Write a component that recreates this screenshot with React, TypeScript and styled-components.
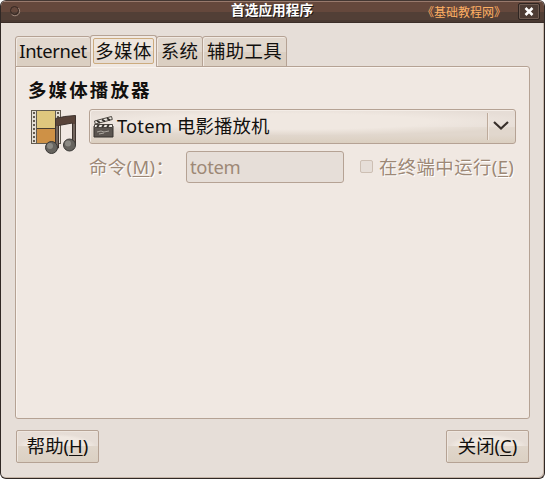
import React from "react";
import styled, { createGlobalStyle } from "styled-components";

const Global = createGlobalStyle`
  html, body { margin: 0; padding: 0; background: #fff; overflow: hidden; }
  * { box-sizing: border-box; }
  button, input { margin: 0; font: inherit; }
  u { text-decoration-thickness: 1px; text-underline-offset: 2px; }
`;

const Window = styled.div`
  width: 545px;
  height: 479px;
  display: flex;
  flex-direction: column;
  overflow: hidden;
  border: 1px solid #302825;
  border-top-color: #443732;
  border-radius: 6px;
  background: #e6ded8;
  box-shadow: inset -1px -1px #c4b4a7;
  color: #12100e;
  font: 18.4px/24px "Noto Sans", "Noto Sans CJK SC", sans-serif;
`;

const TitleBar = styled.header`
  height: 22px;
  flex: none;
  display: grid;
  grid-template-columns: 230px 197px 1fr 26px;
  border-bottom: 1px solid #3a2d28;
  background: linear-gradient(#98796c 0 1px, #65483c 1px 11px, #523f36 11px 19px, #493932 19px);
`;

const MenuDot = styled.svg`
  margin: 4px 0 0 8px;
`;

const Title = styled.h1`
  margin: 0;
  font-size: 13.7px;
  line-height: 18px;
  font-weight: 700;
  color: #fff;
  text-shadow: 1px 1px #211815;
  white-space: nowrap;
`;

const Credit = styled.span`
  font-size: 12px;
  line-height: 24px;
  color: #ffb064;
  white-space: nowrap;
  text-indent: -6px;
`;

const CloseBox = styled.button`
  width: 22px;
  height: 17px;
  margin-top: 2px;
  padding: 0;
  display: grid;
  place-items: center;
  border: 1px solid #2f2521;
  border-radius: 2px;
  background: #4d3c34;
  box-shadow: inset 0 0 0 1px #6f5c52;
`;

const Tabs = styled.nav`
  display: flex;
  align-items: flex-end;
  height: 44px;
  flex: none;
  padding-left: 14px;
  margin-bottom: -1px;
  z-index: 1;
`;

const Tab = styled.button<{ $width: number; $active?: boolean; $tracking?: number }>`
  width: ${(p) => p.$width}px;
  height: ${(p) => (p.$active ? 32 : 31)}px;
  padding: ${(p) => (p.$active ? "2px 2px 4px" : "0 0 1px")};
  margin-right: -1px;
  border: 1px solid #b5a294;
  border-bottom-color: ${(p) => (p.$active ? "#f0e8e2" : "#b5a294")};
  border-radius: 3px 3px 0 0;
  background: ${(p) => (p.$active ? "#f0e8e2" : "linear-gradient(#e2d8ce 0 50%, #dbcfc2 50%)")};
  box-shadow: inset 1px 1px #f1e9e2;
  color: inherit;
  letter-spacing: ${(p) => p.$tracking ?? 0.4}px;
  white-space: nowrap;
`;

const FocusRing = styled.span`
  display: block;
  height: 26px;
  line-height: 23px;
  border: 1px solid #ccab7e;
  border-radius: 2px;
  background: linear-gradient(#efe6de 0 50%, #e6dcd3 50%);
`;

const Panel = styled.main`
  height: 353px;
  flex: none;
  margin: 0 14px;
  padding: 10px 13px 0 12px;
  border: 1px solid #b5a294;
  border-radius: 0 3px 3px 3px;
  background: #f0e8e2;
  box-shadow: inset 1px 1px #f9f3ee;
`;

const Heading = styled.h2`
  margin: 0;
  height: 29px;
  font-size: 18.5px;
  line-height: 26px;
  font-weight: 700;
  letter-spacing: 2.1px;
`;

const Player = styled.section`
  display: grid;
  grid-template-columns: 61px 427px;
`;

const Choices = styled.div`
  margin-top: 3px;
`;

const Combo = styled.button`
  width: 427px;
  height: 35px;
  padding: 0 0 1px 3px;
  display: flex;
  align-items: center;
  border: 1px solid #b5a294;
  border-radius: 3px;
  background:
    radial-gradient(ellipse 260px 14px at 46% 35%, #f0e8e1 0 55%, transparent),
    linear-gradient(#e6ddd6 0 50%, #e1d7cd 50% 75%, #dbcfc0);
  box-shadow: inset 1px 1px #f4ede7;
  color: inherit;
`;

const ComboLabel = styled.span`
  flex: 1;
  margin-left: 3px;
  text-align: left;
  letter-spacing: 0.15px;
`;

const ComboArrow = styled.span`
  width: 28px;
  height: 27px;
  display: grid;
  place-items: center;
  border-left: 1px solid #bdaa9b;
  box-shadow: inset 1px 0 #f1e8e0;
  svg { margin: 0 2px 1px 0; }
`;

const CommandRow = styled.div`
  display: grid;
  grid-template-columns: 97px 173px 1fr;
  height: 32px;
  margin-top: 7px;
  color: #9d8876;
  text-shadow: 1px 1px #fff;
  line-height: 32px;
  white-space: nowrap;
  letter-spacing: 0.4px;
`;

const Entry = styled.input`
  width: 158px;
  height: 32px;
  padding: 0 3px;
  border: 1px solid #b5a294;
  border-radius: 3px;
  background: #e6ded8;
  color: #9d8876;
  letter-spacing: -0.3px;
`;

const CheckLabel = styled.label`
  display: flex;
  align-items: center;
`;

const Check = styled.span`
  width: 13px;
  height: 13px;
  margin: 0 6px 1px 1px;
  flex: none;
  border: 1px solid #cdbfb3;
  border-radius: 2px;
  background: #e6ded8;
`;

const Actions = styled.footer`
  display: flex;
  justify-content: space-between;
  padding: 11px 15px 0;
`;

const Action = styled.button`
  width: 83px;
  height: 33px;
  padding: 0 0 1px;
  border: 1px solid #b5a294;
  border-radius: 2px;
  background:
    linear-gradient(transparent 50%, #e0d6cb 50%, #dbd0c3),
    radial-gradient(ellipse 40px 14px at 50% 55%, #f0e8e1 80%, #e6ddd6);
  box-shadow: inset 1px 1px #eee6df;
  color: inherit;
  white-space: nowrap;
`;

const MediaIcon = () => (
  <svg width="50" height="50" viewBox="-2 0 50 50">
    <path d="M1 4h30v34H1z" fill="#625b50" />
    <path d="M7 5h18v17H7z" fill="#dfc77e" />
    <path d="M7 23h18v14H7z" fill="#ce9146" />
    <path d="M7 22.500h18" stroke="#493d30" />
    <path d="M4 5v32M28 5v32" stroke="#e4ded5" strokeWidth="4" />
    <path d="M4 6v31M28 6v31" stroke="#645b50" strokeWidth="2" strokeDasharray="2 2" />
    <path d="M25.500 12.500Q34 10 45.500 9.500V39h-3V17L28.500 19.500V42h-3z" fill="#59443a" stroke="#3e332e" />
    <path d="M27 20v20M44 18v18" stroke="#8b8681" />
    <circle cx="21.500" cy="41.500" r="6" fill="#66635e" stroke="#393735" />
    <circle cx="39.500" cy="39" r="6" fill="#66635e" stroke="#393735" />
    <circle cx="20" cy="40" r="3" fill="#8c8a84" />
    <circle cx="38" cy="37.500" r="3" fill="#8c8a84" />
  </svg>
);

const ClapperIcon = () => (
  <svg width="21" height="23" viewBox="0 0 21 23">
    <path d="M1 11h19v11H1z" fill="#5b5550" stroke="#37332f" />
    <path d="M1.500 6L18.500 1.500l.8 3L2.300 9z" fill="#eeeae3" stroke="#4c4741" />
    <path d="M4 5.800l3 2M9 4.500l3 2M14 3.200l3 2" stroke="#34302c" strokeWidth="1.800" />
    <path d="M1.500 9.500h18v3h-18z" fill="#eeeae3" stroke="#4c4741" />
    <path d="M4 12l2-2M9 12l2-2M14 12l2-2" stroke="#34302c" strokeWidth="1.800" />
    <path d="M4 17l4-1 3 1 5-1M6 19l5-1" stroke="#aaa59e" fill="none" />
  </svg>
);

export default function App() {
  return (
    <>
      <Global />
      <Window>
        <TitleBar>
          <MenuDot width="12" height="12" viewBox="0 0 12 12" fill="none">
            <circle cx="5.500" cy="5.500" r="4" stroke="#342722" />
            <path d="M2.500 9.200A4.500 4.500 0 0 0 9.500 3" stroke="#a08a7d" />
          </MenuDot>
          <Title>首选应用程序</Title>
          <Credit>《基础教程网》</Credit>
          <CloseBox aria-label="关闭">
            <svg width="10" height="9" viewBox="0 0 10 9">
              <path d="M1.500 1l7 7M8.500 1l-7 7" stroke="#fff" strokeWidth="2.500" />
            </svg>
          </CloseBox>
        </TitleBar>
        <Tabs>
          <Tab $width={76} $tracking={-0.4}>Internet</Tab>
          <Tab $width={67} $active><FocusRing>多媒体</FocusRing></Tab>
          <Tab $width={47}>系统</Tab>
          <Tab $width={85}>辅助工具</Tab>
        </Tabs>
        <Panel>
          <Heading>多媒体播放器</Heading>
          <Player>
            <MediaIcon />
            <Choices>
              <Combo>
                <ClapperIcon />
                <ComboLabel>Totem 电影播放机</ComboLabel>
                <ComboArrow>
                  <svg width="18" height="12" viewBox="0 0 18 12" fill="none">
                    <path d="M2 2l7 6.500L16 2" stroke="#38302b" strokeWidth="2.200" />
                  </svg>
                </ComboArrow>
              </Combo>
              <CommandRow>
                <span>命令(<u>M</u>)：</span>
                <Entry value="totem" disabled readOnly />
                <CheckLabel><Check /><span>在终端中运行(<u>E</u>)</span></CheckLabel>
              </CommandRow>
            </Choices>
          </Player>
        </Panel>
        <Actions>
          <Action>帮助(<u>H</u>)</Action>
          <Action>关闭(<u>C</u>)</Action>
        </Actions>
      </Window>
    </>
  );
}
